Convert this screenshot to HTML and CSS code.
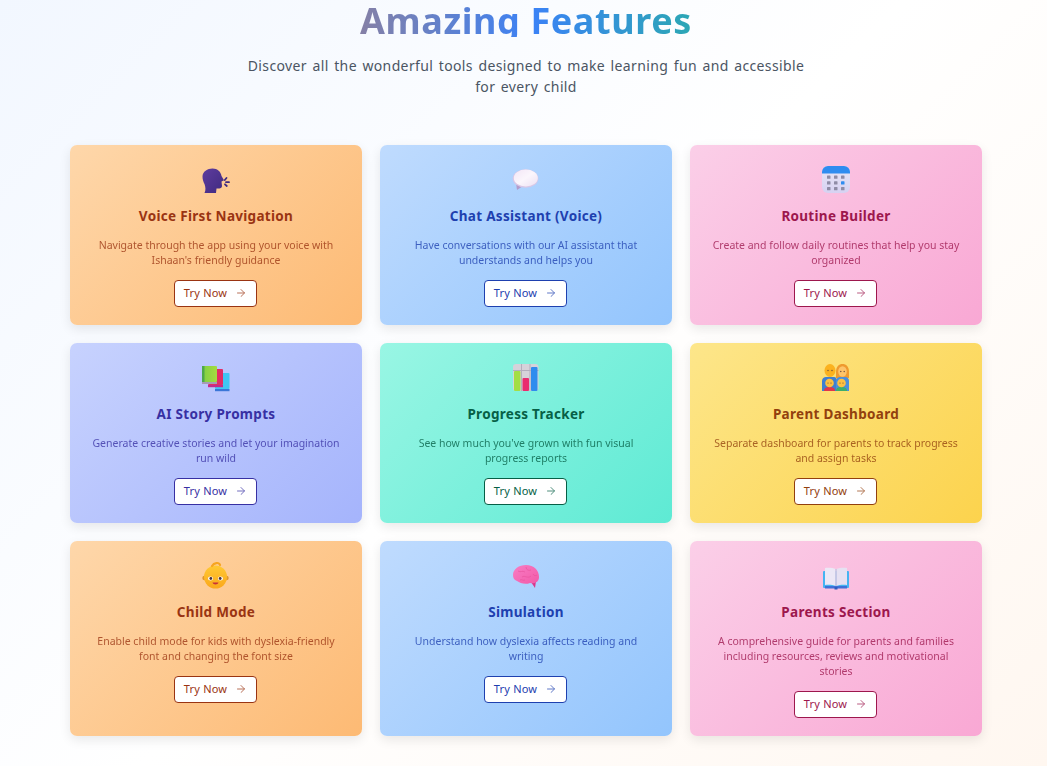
FILE: index.html
```html
<!DOCTYPE html>
<html>
<head>
<title>Amazing Features</title>
<link rel="stylesheet" href="styles.css">
</head>
<body>
<svg class="defs" width="0" height="0">
    <defs>
        <linearGradient id="gHead" x1="0" y1="0" x2="1" y2="1"><stop offset="0" stop-color="#5f3c9e"/><stop offset="1" stop-color="#3f2a80"/></linearGradient>
        <linearGradient id="gChat" x1="0" y1="0" x2="1" y2="1"><stop offset="0" stop-color="#f3e6f6"/><stop offset=".5" stop-color="#fbf6fc"/><stop offset="1" stop-color="#ece0f2"/></linearGradient>
        <linearGradient id="gCal" x1="0" y1="0" x2="0" y2="1"><stop offset="0" stop-color="#e9e6f5"/><stop offset="1" stop-color="#d6d2f2"/></linearGradient>
        <linearGradient id="gBrain" x1="0" y1="0" x2="1" y2="1"><stop offset="0" stop-color="#f87cc4"/><stop offset="1" stop-color="#f25aa8"/></linearGradient>
        <linearGradient id="gBaby" x1="0" y1="0" x2="0" y2="1"><stop offset="0" stop-color="#ffc933"/><stop offset="1" stop-color="#fba81c"/></linearGradient>
        <linearGradient id="gGreen" x1="0" y1="0" x2="1" y2="0"><stop offset="0" stop-color="#7fcf45"/><stop offset="1" stop-color="#a5dc3f"/></linearGradient>
    </defs>
</svg>

<div class="features">
    <h1 class="features-title">Amazing Features</h1>
    <p class="features-sub">Discover all the wonderful tools designed to make learning fun and accessible for every child</p>

    <div class="grid">
        <div class="card orange">
            <svg class="icon" viewBox="0 0 30 30">
                <path fill="url(#gHead)" d="M1.500 11.500C1.500 6.500 6.500 3.500 11.500 3.500C16.500 3.500 20 7 20.500 11L23 15.300L20.500 16.600L21 21C21 23.300 18.500 23.800 15.500 23.500L15 28H3.500C5 25 4.500 22 3.500 19C2.200 16.500 1.500 14 1.500 11.500Z"/>
                <path stroke="#3f2a80" stroke-width="1.800" stroke-linecap="round" fill="none" d="M23.800 15L25.500 13M25 17.200H28M24 19.300L25.800 21"/>
            </svg>
            <h2>Voice First Navigation</h2>
            <p>Navigate through the app using your voice with Ishaan's friendly guidance</p>
            <a class="btn">Try Now <svg viewBox="0 0 24 24"><path d="M5 12h14M12 5l7 7-7 7"/></svg></a>
        </div>
        <div class="card blue">
            <svg class="icon" viewBox="0 0 30 30">
                <path fill="#b39bcb" d="M5 18L6 25L12 21Z"/>
                <ellipse cx="14.500" cy="13.500" rx="12.800" ry="9.300" fill="#d9c7e6"/>
                <ellipse cx="14.800" cy="13" rx="12" ry="8.500" fill="url(#gChat)"/>
            </svg>
            <h2>Chat Assistant (Voice)</h2>
            <p>Have conversations with our AI assistant that understands and helps you</p>
            <a class="btn">Try Now <svg viewBox="0 0 24 24"><path d="M5 12h14M12 5l7 7-7 7"/></svg></a>
        </div>
        <div class="card pink">
            <svg class="icon" viewBox="0 0 30 30">
                <rect x="1" y="1" width="28" height="27" rx="6" fill="url(#gCal)"/>
                <path fill="#2f8cf0" d="M7 1H23A6 6 0 0 1 29 7V8.500H1V7A6 6 0 0 1 7 1Z"/>
                <g fill="#8f8ca6">
                    <rect x="6" y="10.500" width="3.500" height="3.300" rx=".6"/><rect x="13" y="10.500" width="3.500" height="3.300" rx=".6"/><rect x="20" y="10.500" width="3.500" height="3.300" rx=".6"/>
                    <rect x="6" y="16.200" width="3.500" height="3.300" rx=".6"/><rect x="13" y="16.200" width="3.500" height="3.300" rx=".6"/>
                    <rect x="6" y="22" width="3.500" height="3.300" rx=".6"/><rect x="13" y="22" width="3.500" height="3.300" rx=".6"/><rect x="20" y="22" width="3.500" height="3.300" rx=".6"/>
                </g>
                <rect x="20" y="16.200" width="3.500" height="3.300" rx=".6" fill="#2f8cf0"/>
            </svg>
            <h2>Routine Builder</h2>
            <p>Create and follow daily routines that help you stay organized</p>
            <a class="btn">Try Now <svg viewBox="0 0 24 24"><path d="M5 12h14M12 5l7 7-7 7"/></svg></a>
        </div>

        <div class="card indigo">
            <svg class="icon" viewBox="0 0 30 30">
                <rect x="14" y="10" width="14.500" height="16" rx="1" fill="#40c6f3"/>
                <rect x="14" y="26" width="14.500" height="2.200" fill="#3a76d8"/>
                <rect x="7" y="6" width="15" height="16" rx="1" fill="#e22c64"/>
                <rect x="7" y="22" width="15" height="2.200" fill="#c42a8a"/>
                <rect x="1" y="3" width="15" height="16" rx="1" fill="url(#gGreen)"/>
                <rect x="1" y="3" width="2.500" height="16" fill="#4fa84a"/>
                <rect x="1" y="19" width="15" height="2" fill="#a79bb4"/>
            </svg>
            <h2>AI Story Prompts</h2>
            <p>Generate creative stories and let your imagination run wild</p>
            <a class="btn">Try Now <svg viewBox="0 0 24 24"><path d="M5 12h14M12 5l7 7-7 7"/></svg></a>
        </div>
        <div class="card teal">
            <svg class="icon" viewBox="0 0 30 30">
                <rect x="2" y="1" width="25.500" height="27" rx="3" fill="#d6d2da"/>
                <path stroke="#b3aebd" stroke-width="1" fill="none" d="M10.500 1V28M19 1V28M2 7.500H27.500"/>
                <rect x="3" y="8" width="6.500" height="20" rx="1" fill="#a3de45"/>
                <rect x="11.500" y="15" width="6.500" height="13" rx="1" fill="#e92c6e"/>
                <rect x="20" y="4" width="6.500" height="24" rx="1" fill="#2f8cee"/>
            </svg>
            <h2>Progress Tracker</h2>
            <p>See how much you've grown with fun visual progress reports</p>
            <a class="btn">Try Now <svg viewBox="0 0 24 24"><path d="M5 12h14M12 5l7 7-7 7"/></svg></a>
        </div>
        <div class="card yellow">
            <svg class="icon" viewBox="0 0 30 30">
                <path fill="#ef9a2e" d="M15 9C15 3.500 18 1 21.500 1C25 1 28 3.500 28 9V15H15Z"/>
                <path fill="#3f7fd0" d="M1 28V18C1 15.500 3 14 5 14H13C15 14 16 16 16 18V28Z"/>
                <path fill="#4a8fdc" d="M15 28V18C15 15.500 17 14 19 14H24C27 14 28 16 28 18V28Z"/>
                <ellipse cx="9" cy="7.500" rx="5.500" ry="6.500" fill="#fbb21f"/>
                <ellipse cx="21.500" cy="8.500" rx="4.300" ry="5.200" fill="#fdc46a"/>
                <path fill="#e2354a" d="M3 28C3 25 5 24 8.500 24C12 24 14 25 14 28Z"/>
                <path fill="#3cae6a" d="M15 28C15 25 17 24 20.500 24C24 24 26 25 26 28Z"/>
                <circle cx="8.500" cy="20" r="4.300" fill="#fdc040"/>
                <circle cx="20.500" cy="20" r="4.300" fill="#fdc040"/>
                <g fill="#6b4a3a">
                    <circle cx="7" cy="7.500" r=".7"/><circle cx="11" cy="7.500" r=".7"/>
                    <circle cx="19.800" cy="8.500" r=".7"/><circle cx="23.200" cy="8.500" r=".7"/>
                    <circle cx="7" cy="20" r=".6"/><circle cx="10" cy="20" r=".6"/>
                    <circle cx="19" cy="20" r=".6"/><circle cx="22" cy="20" r=".6"/>
                </g>
            </svg>
            <h2>Parent Dashboard</h2>
            <p>Separate dashboard for parents to track progress and assign tasks</p>
            <a class="btn">Try Now <svg viewBox="0 0 24 24"><path d="M5 12h14M12 5l7 7-7 7"/></svg></a>
        </div>

        <div class="card orange">
            <svg class="icon" viewBox="0 0 30 30">
                <circle cx="3.500" cy="17" r="2.200" fill="#e0962a"/>
                <circle cx="25.500" cy="17" r="2.200" fill="#e0962a"/>
                <circle cx="14.500" cy="16" r="11.500" fill="url(#gBaby)"/>
                <path fill="none" stroke="#f7a51f" stroke-width="2.200" stroke-linecap="round" d="M11 5C13 1.500 18 1 19 4"/>
                <ellipse cx="9.500" cy="17.500" rx="2.500" ry="1.900" fill="#fff"/>
                <ellipse cx="19.500" cy="17.500" rx="2.500" ry="1.900" fill="#fff"/>
                <circle cx="9.800" cy="17.500" r="1.400" fill="#4a3340"/>
                <circle cx="19.200" cy="17.500" r="1.400" fill="#4a3340"/>
                <path fill="#c8323a" d="M11.500 21.500H17.500C17 24 12 24 11.500 21.500Z"/>
            </svg>
            <h2>Child Mode</h2>
            <p>Enable child mode for kids with dyslexia-friendly font and changing the font size</p>
            <a class="btn">Try Now <svg viewBox="0 0 24 24"><path d="M5 12h14M12 5l7 7-7 7"/></svg></a>
        </div>
        <div class="card blue">
            <svg class="icon" viewBox="0 0 30 30">
                <path fill="#d8378c" d="M20 21L24 27L25 20Z"/>
                <path fill="url(#gBrain)" d="M2 14C2 8 8 4 15 4C23 4 28 9 28 16C28 21 24 23 19 22C14 24 9 22 6 20C3 19 2 17 2 14Z"/>
                <path fill="none" stroke="#e8559f" stroke-width=".7" d="M7 10C10 12 11 9 14 11M15 6C15 9 18 10 20 9M11 16C14 14 17 18 20 15M22 13C23 15 25 15 26 14M9 19C11 18 12 20 14 19"/>
            </svg>
            <h2>Simulation</h2>
            <p>Understand how dyslexia affects reading and writing</p>
            <a class="btn">Try Now <svg viewBox="0 0 24 24"><path d="M5 12h14M12 5l7 7-7 7"/></svg></a>
        </div>
        <div class="card pink">
            <svg class="icon" viewBox="0 0 30 30">
                <rect x="2" y="10" width="26" height="17" rx="1" fill="#45b4f2"/>
                <rect x="4" y="25" width="22" height="2.500" fill="#3f72d8"/>
                <rect x="13.500" y="26" width="3" height="2.500" fill="#2f5cc0"/>
                <path fill="#ece8f6" d="M4 7C8 6.500 12 7 14.800 8V25C12 24 8 23.500 4 24Z"/>
                <path fill="#e6e1f2" d="M26 7C22 6.500 18 7 15.200 8V25C18 24 22 23.500 26 24Z"/>
                <rect x="14.400" y="8" width="1.200" height="17" fill="#c4bbdc"/>
            </svg>
            <h2>Parents Section</h2>
            <p>A comprehensive guide for parents and families including resources, reviews and motivational stories</p>
            <a class="btn">Try Now <svg viewBox="0 0 24 24"><path d="M5 12h14M12 5l7 7-7 7"/></svg></a>
        </div>
    </div>
</div>
</body>
</html>
```

FILE: styles.css
```css
html, body {
    height: 100%;
}
body {
    margin: 0;
    overflow: hidden;
    font-family: "Noto Sans", "Open Sans", sans-serif;
    background: linear-gradient(135deg, #f2f7ff 0%, #ffffff 50%, #fff7f0 100%);
}
.defs {
    display: block;
    height: 0;
}
.features {
    padding: 0 65px 0 70px;
}
.features-title {
    margin: 0 auto;
    width: fit-content;
    padding-top: 5px;
    font-size: 36px;
    line-height: 32px;
    font-weight: 700;
    letter-spacing: .6px;
    text-align: center;
    white-space: nowrap;
    color: transparent;
    background: linear-gradient(90deg, #8580a6 0%, #3b82f6 52%, #2ca7b4 100%);
    -webkit-background-clip: text;
    background-clip: text;
}
.features-sub {
    margin: 18px auto 0;
    width: 570px;
    font-size: 14px;
    line-height: 21px;
    letter-spacing: .37px;
    word-spacing: 1.5px;
    text-align: center;
    color: #4b5563;
}
.grid {
    display: grid;
    grid-template-columns: repeat(3, 1fr);
    gap: 18px;
    margin-top: 48px;
}
.card {
    display: flex;
    flex-direction: column;
    align-items: center;
    padding: 20px 19px 18px;
    border-radius: 7px;
    text-align: center;
    box-shadow: 0 4px 12px rgba(0, 0, 0, .09);
}
.icon {
    width: 30px;
    height: 30px;
    flex: none;
}
.card h2 {
    margin: 11px 0 0;
    font-size: 13.500px;
    line-height: 20px;
    font-weight: 700;
    letter-spacing: .3px;
}
.card p {
    margin: 12px 0 0;
    font-size: 10.500px;
    line-height: 15px;
    opacity: .78;
}
.btn {
    display: flex;
    align-items: center;
    justify-content: center;
    gap: 8px;
    box-sizing: border-box;
    width: 83px;
    height: 27px;
    margin: 12px 1px 0 0;
    padding-bottom: 2px;
    font-size: 11px;
    letter-spacing: .2px;
    background: #fff;
    border: 1px solid currentColor;
    border-radius: 4px;
}
.btn svg {
    width: 12px;
    height: 12px;
    fill: none;
    stroke: currentColor;
    stroke-width: 2;
    stroke-linecap: round;
    stroke-linejoin: round;
    opacity: .7;
}
.orange {
    background: linear-gradient(135deg, #fed7aa, #fdba74);
    color: #9a3412;
}
.blue {
    background: linear-gradient(135deg, #bfdbfe, #93c5fd);
    color: #1e40af;
}
.pink {
    background: linear-gradient(135deg, #fbcfe8, #f9a8d4);
    color: #9d174d;
}
.indigo {
    background: linear-gradient(135deg, #c7d2fe, #a5b4fc);
    color: #3730a3;
}
.teal {
    background: linear-gradient(135deg, #99f6e4, #5eead4);
    color: #065f46;
}
.yellow {
    background: linear-gradient(135deg, #fde68a, #fcd34d);
    color: #92400e;
}
```
